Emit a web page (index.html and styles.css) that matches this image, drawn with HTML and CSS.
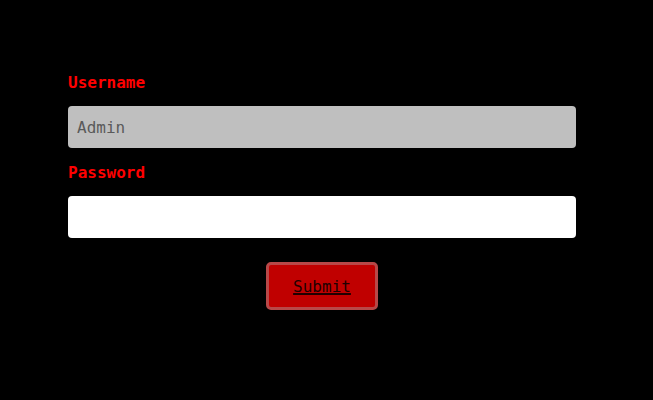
FILE: index.html
```html
<!DOCTYPE html>
<html>
<head>
<meta charset="utf-8">
<link rel="stylesheet" href="styles.css">
</head>
<body>
<form class="login">
  <label class="field-label" for="user">Username</label>
  <input class="field field-disabled" id="user" type="text" value="Admin" disabled>
  <label class="field-label" for="pass">Password</label>
  <input class="field" id="pass" type="password">
  <div class="actions">
    <button class="submit" type="button"><u class="submit-text">Submit</u></button>
  </div>
</form>
</body>
</html>
```

FILE: styles.css
```css
html, body {
  margin: 0;
  padding: 0;
  background: #000;
  height: 100%;
}
body {
  font-family: "DejaVu Sans Mono", "Liberation Mono", monospace;
}
.login {
  display: flex;
  flex-direction: column;
  width: 508px;
  padding: 73px 0 0 68px;
}
.field-label {
  color: #ff0000;
  font-weight: bold;
  font-size: 16px;
  line-height: 19px;
}
.field {
  box-sizing: border-box;
  height: 42px;
  margin: 14px 0 15px;
  padding: 0 9px;
  border: none;
  border-radius: 4px;
  background: #fff;
  font-family: inherit;
  font-size: 16px;
  color: #555;
  outline: none;
}
.field-disabled {
  background: #bfbfbf;
  color: #5a5a5a;
  -webkit-text-fill-color: #5a5a5a;
  opacity: 1;
}
.actions {
  display: flex;
  justify-content: center;
  margin-top: 9px;
}
.submit {
  box-sizing: border-box;
  width: 112px;
  height: 48px;
  background: #c00000;
  border: 3px solid #b84848;
  border-radius: 5px;
  font-family: inherit;
  font-size: 16px;
  color: #200000;
  padding: 0;
  cursor: pointer;
  text-decoration: underline;
}
.submit-text {
  text-decoration: underline;
  text-decoration-thickness: 1px;
  text-underline-offset: 2px;
}
```
